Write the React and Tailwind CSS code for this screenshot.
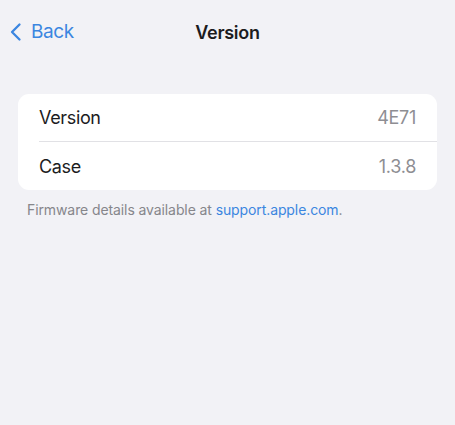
import React from 'react';

const rows = [
  { label: 'Version', value: '4E71' },
  { label: 'Case', value: '1.3.8' },
];

export default function App() {
  return (
    <div
      className="w-[455px] h-[425px] bg-[#f2f2f6] overflow-hidden"
      style={{ fontFamily: 'Inter, "Liberation Sans", sans-serif' }}
    >
      {/* nav bar */}
      <div className="relative flex items-center h-[44px] mt-[10px]">
        <button className="flex items-center pl-[9px] text-[#3b86e0]">
          <svg width="14" height="20" viewBox="0 0 14 20" fill="none">
            <path d="M10.5 2.5 L3 10 L10.5 17.5" stroke="currentColor" strokeWidth="2.3" strokeLinecap="round" strokeLinejoin="round" />
          </svg>
          <span className="ml-[8px] text-[19px] tracking-[-0.4px]">Back</span>
        </button>
        <div className="absolute left-0 right-0 text-center pointer-events-none text-[18px] font-semibold text-[#1c1c1e] tracking-[-0.3px]">
          Version
        </div>
      </div>

      {/* card */}
      <div className="mx-[18px] mt-[40px] bg-white rounded-[11px] overflow-hidden">
        {rows.map((r, i) => (
          <div key={r.label} className="pl-[21px]">
            <div className={`flex items-center justify-between h-[48px] pr-[21px] ${i < rows.length - 1 ? 'border-b border-[#e1e1e5]' : ''}`}>
              <span className="text-[18px] text-[#1c1c1e] tracking-[-0.35px]">{r.label}</span>
              <span className="text-[18px] text-[#8e8e93] tracking-[-0.3px]">{r.value}</span>
            </div>
          </div>
        ))}
      </div>

      <p className="mt-[9px] pl-[27px] text-[14px] text-[#86868b] tracking-[-0.1px]">
        Firmware details available at <span className="text-[#3b86e0]">support.apple.com</span>.
      </p>
    </div>
  );
}
